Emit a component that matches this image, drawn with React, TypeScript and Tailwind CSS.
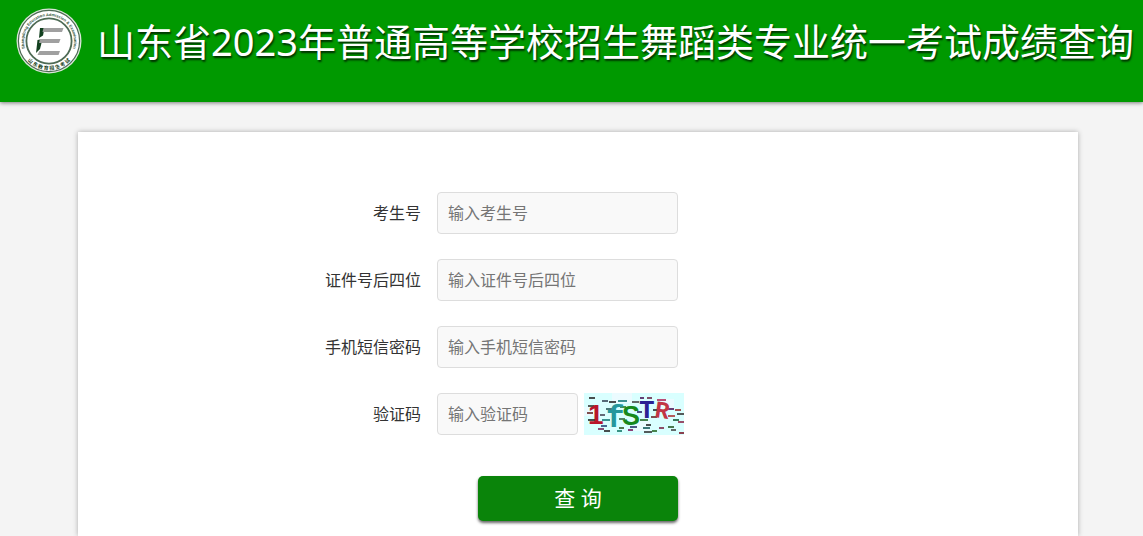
import type { FormEvent, ReactNode } from 'react'

const inputClass =
  'h-[42px] rounded border border-[#dddddd] bg-[#f9f9f9] px-[10px] text-base text-[#333333] placeholder:text-[#757575] focus:border-[#0a840a] focus:outline-none'

const fields = [
  { id: 'ksh', label: '考生号', placeholder: '输入考生号', type: 'text' },
  { id: 'zjh', label: '证件号后四位', placeholder: '输入证件号后四位', type: 'text' },
  { id: 'sms', label: '手机短信密码', placeholder: '输入手机短信密码', type: 'password' },
]

// noise strokes over the captcha: x, y, length, color
const noise: [number, number, number, string][] = [
  [5, 5, 6, '#222'], [18, 8, 6, '#345'], [25, 9, 7, '#222'], [34, 8, 9, '#177'],
  [48, 9, 7, '#444'], [56, 5, 4, '#415'], [63, 5, 5, '#624'], [73, 7, 9, '#a25'],
  [4, 13, 6, '#333'], [22, 16, 6, '#255'], [36, 14, 6, '#272'],
  [84, 16, 6, '#415'], [91, 17, 6, '#922'], [3, 20, 6, '#622'], [16, 22, 5, '#445'],
  [53, 19, 5, '#226'], [69, 17, 5, '#222'], [84, 23, 7, '#a33'],
  [93, 21, 7, '#333'], [4, 27, 8, '#222'], [18, 27, 8, '#177'], [35, 26, 6, '#364'],
  [56, 27, 8, '#262'], [67, 24, 6, '#622'], [89, 27, 6, '#153'], [94, 29, 6, '#824'],
  [17, 33, 6, '#247'], [35, 35, 5, '#352'], [46, 34, 7, '#236'], [62, 32, 5, '#222'],
  [14, 36, 6, '#725'], [20, 38, 6, '#222'], [33, 38, 5, '#176'], [44, 37, 5, '#715'],
  [59, 35, 7, '#155'], [68, 38, 5, '#262'], [75, 35, 5, '#724'],
  [84, 34, 6, '#252'], [60, 39, 8, '#333'], [87, 37, 5, '#444'], [95, 40, 5, '#712'],
]

function Logo() {
  return (
    <svg className="size-[66px] shrink-0" viewBox="0 0 66 66" aria-hidden="true">
      <defs>
        <path id="ring-top" d="M11.300 45.500A25 25 0 1 1 54.700 45.500" />
        <path id="ring-bottom" d="M4 33A29 29 0 0 0 62 33" />
      </defs>
      <circle cx="33" cy="33" r="32.5" fill="#dbe6da" />
      <circle cx="33" cy="33" r="30.6" fill="#fff" stroke="#4d6a54" strokeWidth="1.2" />
      <circle cx="33" cy="33" r="22.6" fill="none" stroke="#4d6a54" strokeWidth="1.8" />
      <text className="font-['Liberation_Sans',sans-serif] text-[4px] font-bold" fill="#31543a">
        <textPath href="#ring-top" startOffset="50%" textAnchor="middle">
          Shangdong Education Admission &amp; Examination
        </textPath>
      </text>
      <text className="font-['Noto_Sans_CJK_SC',sans-serif] text-[5px] font-bold" fill="#183f23">
        <textPath href="#ring-bottom" startOffset="50%" textAnchor="middle">
          山 东 教 育 招 生 考 试
        </textPath>
      </text>
      <path d="M24 20h4.500l-1.500 7.500-4 2.500zM21.500 32l5-1-2.500 10-4 4z" fill="#12401f" />
      <path d="M27.500 20h20l-1.500 4h-19.500zM24 31h20.500l-1.500 4h-20zM23.500 43h20.500l-1.500 4h-21z" fill="#a0a0a0" />
    </svg>
  )
}

function Captcha() {
  return (
    <svg className="h-[42px] w-[100px]" viewBox="0 0 100 42" aria-hidden="true">
      <rect width="100" height="42" fill="#d9ffff" />
      <path d="M0 14h16v9h-16zM28 0h20v10h-20zM50 28h16v10h-16zM76 6h14v10h-14z" fill="#ebfbff" />
      {noise.map(([x, y, len, color]) => (
        <path key={`${x}-${y}`} d={`M${x} ${y}h${len}`} stroke={color} strokeWidth="1.6" />
      ))}
      <g className="font-['Liberation_Sans',sans-serif] font-bold">
        <text x="4" y="31" fontSize="28" fill="#b8152b">1</text>
        <text x="22" y="34" fontSize="31" fill="#25979c" className="font-['Liberation_Mono',monospace]">f</text>
        <text x="38" y="32" fontSize="27" fill="#16891c">S</text>
        <text x="55" y="25" fontSize="26" fill="#2a2192" className="font-['Liberation_Mono',monospace]">T</text>
        <text x="71" y="25" fontSize="24" fill="#c23545" className="font-['Liberation_Mono',monospace]" transform="rotate(8 78 18)">R</text>
      </g>
    </svg>
  )
}

interface FormRowProps {
  id: string
  label: string
  children: ReactNode
}

function FormRow({ id, label, children }: FormRowProps) {
  return (
    <div className="grid items-center gap-x-4 gap-y-2 md:grid-cols-[343px_1fr]">
      <label htmlFor={id} className="text-base text-[#333333] md:text-right">
        {label}
      </label>
      <div className="flex items-center gap-[6px]">{children}</div>
    </div>
  )
}

export default function App() {
  const handleSubmit = (e: FormEvent) => {
    e.preventDefault()
  }

  return (
    <div className="flex min-h-screen flex-col bg-[#f4f4f4] font-['Noto_Sans','Noto_Sans_CJK_SC',sans-serif]">
      <header className="flex min-h-[102px] items-start gap-[15px] bg-[#009900] pt-2 pl-4 shadow-[0_1px_4px_rgba(0,0,0,0.5)]">
        <Logo />
        <h1 className="pt-[3px] text-[38px] leading-[60px] text-white [text-shadow:1px_2px_2px_rgba(0,0,0,0.7)] lg:whitespace-nowrap">
          山东省2023年普通高等学校招生舞蹈类专业统一考试成绩查询
        </h1>
      </header>

      <main className="flex flex-1 flex-col pt-[30px] pl-[13px]">
        <form
          onSubmit={handleSubmit}
          className="mx-auto flex w-full max-w-[1000px] flex-1 flex-col gap-[25px] bg-white px-4 pt-[60px] shadow-[0_0_5px_rgba(0,0,0,0.3)] md:px-0"
        >
          {fields.map((field) => (
            <FormRow key={field.id} id={field.id} label={field.label}>
              <input
                id={field.id}
                type={field.type}
                placeholder={field.placeholder}
                className={`${inputClass} w-[241px]`}
              />
            </FormRow>
          ))}
          <FormRow id="yzm" label="验证码">
            <input id="yzm" type="text" placeholder="输入验证码" className={`${inputClass} w-[141px]`} />
            <button type="button" aria-label="换一张验证码" className="cursor-pointer">
              <Captcha />
            </button>
          </FormRow>
          <div className="pt-4 pb-[15px] md:pl-[400px]">
            <button
              type="submit"
              className="h-[45px] w-[200px] cursor-pointer rounded-[5px] bg-[#0a840a] text-[21px] text-white shadow-[0_2px_3px_rgba(0,0,0,0.6)] hover:bg-[#009900]"
            >
              查 询
            </button>
          </div>
        </form>
      </main>
    </div>
  )
}
